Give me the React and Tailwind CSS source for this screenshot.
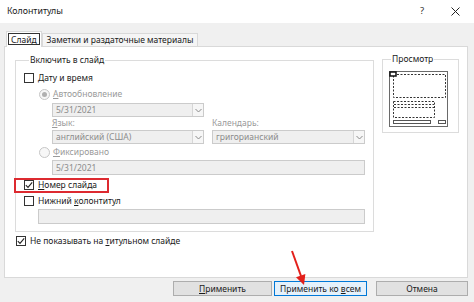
import React from 'react'

const Check = ({ checked }) => (
  <span className="w-[10px] h-[10px] border border-[#333] bg-white flex items-center justify-center shrink-0">
    {checked && (
      <svg width="8" height="8" viewBox="0 0 8 8">
        <path d="M0.8 4.2 L3 6.4 L7.2 1.4" fill="none" stroke="#222" strokeWidth="1.1" />
      </svg>
    )}
  </span>
)

const Radio = ({ on }) => (
  <span className="w-[11px] h-[11px] rounded-full border border-[#c6c6c6] bg-[#f7f7f7] flex items-center justify-center shrink-0">
    {on && <span className="w-[5px] h-[5px] rounded-full bg-[#b0b0b0]" />}
  </span>
)

const Chevron = () => (
  <svg width="7" height="5" viewBox="0 0 7 5">
    <path d="M0.5 1 L3.5 4 L6.5 1" fill="none" stroke="#8a8a8a" strokeWidth="1" />
  </svg>
)

const Select = ({ text, w }) => (
  <div className={`${w} h-[14px] border border-[#cbcbcb] bg-[#efefef] flex items-center`}>
    <span className="flex-1 pl-[3px] text-[#8c8c8c] leading-[12px]">{text}</span>
    <span className="w-[11px] h-full border-l border-[#d6d6d6] bg-[#f6f6f6] flex items-center justify-center">
      <Chevron />
    </span>
  </div>
)

const Field = ({ text, w }) => (
  <div className={`${w} h-[15px] border border-[#cbcbcb] bg-[#efefef] flex items-center pl-[3px] text-[#8c8c8c] leading-[12px]`}>
    {text}
  </div>
)

const Button = ({ children, w, primary }) => (
  <button
    className={`${w} h-[15px] border flex items-center justify-center leading-[12px] text-[#1a1a1a] ${
      primary ? 'border-[#0078d7] bg-[#e5f1fb]' : 'border-[#adadad] bg-[#e1e1e1]'
    }`}
  >
    {children}
  </button>
)

const Thumb = () => (
  <svg width="59" height="56" viewBox="0 0 59 56">
    <rect x="0.5" y="0.5" width="58" height="55" fill="#fff" stroke="#6a6a6a" />
    <rect x="4.5" y="3.5" width="52" height="23" fill="none" stroke="#333" strokeDasharray="2 1.5" />
    <rect x="4.5" y="30.5" width="41" height="16" fill="none" stroke="#333" strokeDasharray="2 1.5" />
    <line x1="5" y1="33.5" x2="45" y2="33.5" stroke="#333" strokeDasharray="2 1.5" />
    <line x1="5" y1="36.5" x2="45" y2="36.5" stroke="#333" strokeDasharray="2 1.5" />
    <rect x="1" y="1" width="6" height="4" fill="#fff" stroke="#111" strokeWidth="1.5" />
    <rect x="4.5" y="49.5" width="37" height="3" fill="#fff" stroke="#555" />
    <rect x="49.5" y="49.5" width="7" height="3" fill="#fff" stroke="#555" />
  </svg>
)

export default function App() {
  return (
    <div className="relative w-[474px] h-[302px] overflow-hidden bg-[#f0f0f0] text-[8.5px] text-[#1a1a1a] font-['Noto_Sans',sans-serif]">
      {/* Title bar */}
      <div className="h-[23px] bg-white flex items-center justify-between pl-[7px] pr-[14px]">
        <span className="text-[8.8px]">Колонтитулы</span>
        <div className="flex items-center gap-[27px]">
          <span className="text-[9.5px] text-[#333]">?</span>
          <svg width="9" height="9" viewBox="0 0 9 9">
            <path d="M0.5 0.5 L8.5 8.5 M8.5 0.5 L0.5 8.5" stroke="#222" strokeWidth="1" />
          </svg>
        </div>
      </div>

      {/* Tabs */}
      <div className="flex items-end pl-[6px] mt-[7px] h-[16px]">
        <div className="h-[16px] bg-white border border-b-0 border-[#d9d9d9] px-[1px] pt-[1px] relative z-10 -mb-[1px]">
          <span className="block border border-[#333] px-[2px] leading-[11px] h-[12px]">Слайд</span>
        </div>
        <div className="h-[13px] border border-b-0 border-[#d9d9d9] bg-[#f5f5f5] px-[4px] leading-[12px]">
          Заметки и раздаточные материалы
        </div>
      </div>

      {/* Panel */}
      <div className="mx-[4px] w-[464px] h-[232px] bg-white border border-[#d9d9d9]">
        <div className="flex items-start">
          <fieldset className="ml-[10px] mt-[6px] w-[359px] border border-[#dcdcdc] pl-[8px] pb-[7px]">
            <legend className="ml-[5px] px-[1px] leading-[14px]">Включить в слайд</legend>
            <div className="h-[12px] mt-[5px] flex items-center gap-[4px]">
              <Check />
              <span><u>Д</u>ату и время</span>
            </div>
            <div className="h-[12px] mt-[4px] pl-[15px] flex items-center gap-[3px] text-[#9a9a9a]">
              <Radio on />
              <span><u>А</u>втообновление</span>
            </div>
            <div className="mt-[3px] pl-[28px]">
              <Select text="5/31/2021" w="w-[152px]" />
            </div>
            <div className="h-[12px] pl-[28px] flex items-center text-[#9a9a9a]">
              <span className="w-[160px]"><u>Я</u>зык:</span>
              <span>Календарь:</span>
            </div>
            <div className="mt-[1px] pl-[28px] flex gap-[8px]">
              <Select text="английский (США)" w="w-[152px]" />
              <Select text="григорианский" w="w-[153px]" />
            </div>
            <div className="h-[12px] mt-[2px] pl-[15px] flex items-center gap-[3px] text-[#9a9a9a]">
              <Radio />
              <span><u>Ф</u>иксировано</span>
            </div>
            <div className="mt-[2px] pl-[28px]">
              <Field text="5/31/2021" w="w-[313px]" />
            </div>
            <div className="h-[12px] mt-[4px] flex items-center gap-[4px]">
              <Check checked />
              <span><u>Н</u>омер слайда</span>
            </div>
            <div className="h-[12px] mt-[4px] flex items-center gap-[4px]">
              <Check />
              <span>Нижний <u>к</u>олонтитул</span>
            </div>
            <div className="mt-[2px] pl-[14px]">
              <Field text="" w="w-[327px]" />
            </div>
          </fieldset>

          <fieldset className="ml-[8px] mt-[5px] w-[77px] border border-[#dcdcdc] pl-[6px] pb-[5px]">
            <legend className="ml-[2px] px-[1px] leading-[14px]">Просмотр</legend>
            <div className="mt-[5px]">
              <Thumb />
            </div>
          </fieldset>
        </div>

        <div className="h-[12px] mt-[3px] ml-[11px] flex items-center gap-[4px]">
          <Check checked />
          <span>Не показывать на <u>т</u>итульном слайде</span>
        </div>
      </div>

      {/* Buttons */}
      <div className="flex justify-end pr-[6px] mt-[3px]">
        <Button w="w-[99px]"><span><u>П</u>рименить</span></Button>
        <div className="w-[2px]" />
        <Button w="w-[93px]" primary><span>Применить ко <u>в</u>сем</span></Button>
        <div className="w-[9px]" />
        <Button w="w-[92px]">Отмена</Button>
      </div>

      {/* Annotations */}
      <div className="absolute left-[14px] top-[178px] w-[95px] h-[15px] border-2 border-[#dd2a30]" />
      <svg className="absolute left-[285px] top-[248px]" width="30" height="42" viewBox="0 0 30 42">
        <line x1="7" y1="3" x2="16" y2="28" stroke="#e3201b" strokeWidth="2" />
        <polygon points="19,37 20.4,25.9 11,29.2" fill="#e3201b" />
      </svg>
    </div>
  )
}
